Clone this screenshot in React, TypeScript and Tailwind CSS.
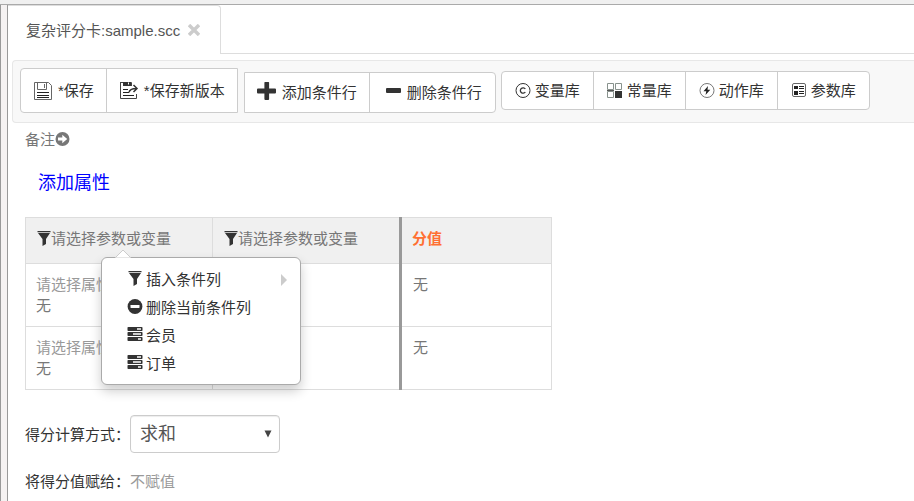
import React, { useState } from 'react';

type IconProps = { className?: string };

const SaveIcon = () => (
  <svg className="h-5 w-5" viewBox="0 0 20 20" fill="none" stroke="#666" strokeWidth="1">
    <path d="M1.5 1.5h14l3 3v14h-17z" />
    <path d="M4.5 1.5v7h9v-7M11.5 3v4" />
    <path d="M4 11.500h12M4 14.500h12M4 16.500h12" stroke="#222" />
  </svg>
);

const SaveAsIcon = () => (
  <svg className="h-5 w-5" viewBox="0 0 20 20" fill="none" stroke="#444">
    <path d="M1.500 1v16.500h16V13M12.500 5V1.500H1.500" />
    <path d="M4 1h8v4H4z" fill="#333" stroke="none" />
    <path d="M9.500 1.500v2" stroke="#fff" />
    <path d="M4 8.500h5M4 11.500h6M4 14.500h11" stroke="#222" />
    <path d="M10 11.500c.5-3 2.500-4 7.500-4M14.500 4l3.500 3.500-3.500 3.500" strokeWidth="1.500" stroke="#333" />
  </svg>
);

const PlusIcon = () => (
  <svg className="h-6 w-5" viewBox="0 0 20 24" fill="#333">
    <path d="M8 1h3.500a.6.6 0 0 1 .6.6V7.500H18a1 1 0 0 1 1 1v3a1 1 0 0 1-1 1h-5.900V18a1 1 0 0 1-1 1H8.400a1 1 0 0 1-1-1v-5.500H1a1 1 0 0 1-1-1v-3a1 1 0 0 1 1-1h6.400V1.600A.6.6 0 0 1 8 1z" />
  </svg>
);

const MinusIcon = () => (
  <svg className="h-6 w-4" viewBox="0 0 16 24" fill="#333">
    <rect x="0" y="7" width="15" height="5" rx="1" />
  </svg>
);

const CopyrightIcon = () => (
  <svg className="h-4 w-4" viewBox="0 0 16 16" fill="none" stroke="#333">
    <circle cx="8" cy="7.500" r="7" strokeWidth="1" />
    <path d="M10.300 6a2.700 2.700 0 1 0 0 3" strokeWidth="1.300" />
  </svg>
);

const BlocksIcon = () => (
  <svg className="h-4 w-4" viewBox="0 0 16 16" fill="none" stroke="#88928d">
    <path d="M.5 .5h6v6h-6zM8.500 .5h6v6h-6zM.5 8.500h6v6h-6z" />
    <path d="M0 7.500h7" stroke="#555" />
    <path d="M8 8h7v7H8z" fill="#333" stroke="none" />
  </svg>
);

const BoltIcon = () => (
  <svg className="h-4 w-4" viewBox="0 0 16 16" fill="none">
    <circle cx="8" cy="7.500" r="7" stroke="#777" />
    <path d="M9 3L4.500 8.300h2.800L6.500 12l4.800-5.300H8.500z" fill="#222" />
  </svg>
);

const ParamIcon = () => (
  <svg className="h-4 w-4" viewBox="0 0 16 16" fill="none">
    <rect x="1.500" y=".5" width="13" height="13" rx="1.500" stroke="#666" />
    <path d="M3 3h4v3H3zM3 8h4v4H3z" fill="#222" />
    <path d="M8 3.500h5M8 5.500h5M8 8.500h5M8 10.500h5" stroke="#222" strokeWidth="1.200" />
  </svg>
);

const FilterIcon = ({ className }: IconProps) => (
  <svg className={className} viewBox="0 0 14 16" fill="#333">
    <path d="M.5 0h13v1.200H.5zM1 2h12L9 8v5l-3.500 2V8z" />
  </svg>
);

const RemoveIcon = () => (
  <svg className="h-4 w-4" viewBox="0 0 16 16">
    <circle cx="8" cy="7.500" r="7.400" fill="#333" />
    <rect x="3.500" y="6" width="9" height="3" rx=".4" fill="#fff" />
  </svg>
);

const TasksIcon = () => (
  <svg className="h-4 w-4" viewBox="0 0 16 16">
    <rect x=".5" y="0" width="15" height="4" rx=".8" fill="#333" />
    <rect x=".5" y="5" width="15" height="4" rx=".8" fill="#333" />
    <rect x=".5" y="10" width="15" height="4" rx=".8" fill="#333" />
    <path d="M10 2h4M6 7h8M11 12h3" stroke="#fff" strokeWidth="1.300" />
  </svg>
);

const ArrowCircleIcon = () => (
  <svg className="h-4 w-4" viewBox="0 0 16 16">
    <circle cx="7.500" cy="7" r="7" fill="#777" />
    <path d="M3 5.600h4.300V2.800L12.200 7l-4.900 4.200V8.400H3z" fill="#fff" />
  </svg>
);

const CloseIcon = () => (
  <svg className="h-3 w-3" viewBox="0 0 12 12" fill="none" stroke="#ccc" strokeWidth="3.400">
    <path d="M1 1l10 10M11 1L1 11" />
  </svg>
);

const libraries = [
  { label: '变量库', icon: <CopyrightIcon /> },
  { label: '常量库', icon: <BlocksIcon /> },
  { label: '动作库', icon: <BoltIcon /> },
  { label: '参数库', icon: <ParamIcon /> },
];

const menuItems = [
  { label: '插入条件列', icon: <FilterIcon className="h-4 w-4" />, submenu: true },
  { label: '删除当前条件列', icon: <RemoveIcon /> },
  { label: '会员', icon: <TasksIcon /> },
  { label: '订单', icon: <TasksIcon /> },
];

const ColumnMenu = () => (
  <div className="absolute left-[75px] top-[39px] z-10 w-[200px] rounded-md border border-[#aaa] bg-white py-[7px] font-normal text-[#333] shadow-[0_6px_12px_rgba(0,0,0,0.2)]">
    <svg className="absolute -top-2 left-3 h-2 w-[18px]" viewBox="0 0 18 8">
      <path d="M1 8l8-8 8 8z" fill="#fff" stroke="#ccc" />
    </svg>
    <ul>
      {menuItems.map((item) => (
        <li key={item.label}>
          <button type="button" className="flex h-7 w-full items-center gap-[3px] pl-[25px] pr-3 text-left">
            {item.icon}
            <span>{item.label}</span>
            {item.submenu && (
              <svg className="ml-auto h-4 w-2" viewBox="0 0 8 16" fill="#ccc">
                <path d="M1 3l6 6-6 6z" />
              </svg>
            )}
          </button>
        </li>
      ))}
    </ul>
  </div>
);

const Toolbar = () => (
  <div className="ml-1 flex h-[63px] items-start rounded-l border border-r-0 border-[#e7e7e7] bg-[#f8f8f8] pl-[7px] pt-[7px]">
    <div className="flex h-[45px] shrink-0 divide-x divide-[#ccc] rounded-l border border-[#ccc] bg-white">
      <button type="button" className="flex items-center gap-[5px] px-3">
        <SaveIcon />
        <span>*保存</span>
      </button>
      <button type="button" className="flex items-center gap-[5px] px-3">
        <SaveAsIcon />
        <span>*保存新版本</span>
      </button>
    </div>
    <div className="ml-[6px] mt-1 flex h-[41px] shrink-0 divide-x divide-[#ccc] rounded-r border border-[#ccc] bg-white">
      <button type="button" className="flex items-center gap-[5px] px-3">
        <PlusIcon />
        <span>添加条件行</span>
      </button>
      <button type="button" className="flex items-center gap-[5px] pl-4 pr-[13px]">
        <MinusIcon />
        <span>删除条件行</span>
      </button>
    </div>
    <div className="ml-[5px] mt-[3px] flex h-[39px] shrink-0 divide-x divide-[#ccc] rounded border border-[#ccc] bg-white">
      {libraries.map(({ label, icon }) => (
        <button type="button" key={label} className="flex items-center gap-1 px-[13px]">
          {icon}
          <span>{label}</span>
        </button>
      ))}
    </div>
  </div>
);

const ScoreTable = () => (
  <table className="mt-[21px] w-[527px] table-fixed border-collapse text-left text-[#777]">
    <colgroup>
      <col className="w-[187px]" />
      <col className="w-[188px]" />
      <col />
    </colgroup>
    <thead>
      <tr className="h-[46px] bg-[#f0f0f0]">
        <th className="relative border border-[#ddd] px-[11px] pb-1 font-normal">
          <span className="flex items-center">
            <FilterIcon className="h-4 w-[14px]" />
            请选择参数或变量
          </span>
          <ColumnMenu />
        </th>
        <th className="border border-[#ddd] px-[11px] pb-1 font-normal">
          <span className="flex items-center">
            <FilterIcon className="h-4 w-[14px]" />
            请选择参数或变量
          </span>
        </th>
        <th className="border border-l-[3px] border-[#ddd] border-l-[#999] px-[10px] pb-1 font-bold text-[#ff7033]">
          分值
        </th>
      </tr>
    </thead>
    <tbody>
      {[1, 2].map((row) => (
        <tr key={row} className="h-[63px] align-top">
          <td className="border border-[#ddd] px-[10px] pt-[10px]">
            <div className="text-[#999]">请选择属性</div>
            <div>无</div>
          </td>
          <td className="border border-[#ddd] px-[10px] pt-[10px]"></td>
          <td className="border border-l-[3px] border-[#ddd] border-l-[#999] px-[11px] pt-[10px]">无</td>
        </tr>
      ))}
    </tbody>
  </table>
);

const App: React.FC = () => {
  const [method, setMethod] = useState('sum');

  return (
    <div className="flex min-h-screen flex-col overflow-x-hidden bg-white font-['Liberation_Sans','Noto_Sans_CJK_SC',sans-serif] text-[15px] leading-[21px] text-[#333]">
      <div className="h-[5px] border-b border-[#aaa] bg-[#f0f0f0]" />
      <div className="flex flex-1">
        <div className="w-2 shrink-0 border-x border-[#999] bg-[#f5f2f2]" />
        <main className="min-w-0 flex-1">
          <div className="flex h-[49px]">
            <div className="flex items-center gap-2 rounded-tr border-r border-t border-[#ddd] pl-[18px] pr-5 text-[#555]">
              <span>复杂评分卡:sample.scc</span>
              <button type="button" aria-label="关闭">
                <CloseIcon />
              </button>
            </div>
            <div className="flex-1 border-b border-[#ddd]" />
          </div>

          <div className="mt-[6px]">
            <Toolbar />
          </div>

          <div className="pl-[17px]">
            <button type="button" className="mt-[6px] flex items-center text-[#777]">
              备注
              <ArrowCircleIcon />
            </button>
            <a href="#" className="ml-[13px] mt-[21px] block w-fit text-[18px] leading-[25px] text-[#0000ff]">
              添加属性
            </a>

            <ScoreTable />

            <div className="mt-[25px] flex items-center">
              <label htmlFor="method">得分计算方式：</label>
              <div className="relative">
                <select
                  id="method"
                  value={method}
                  onChange={(e) => setMethod(e.target.value)}
                  className="h-[38px] w-[150px] appearance-none rounded border border-[#ccc] bg-white pl-[9px] text-[18px] text-[#555] shadow-[inset_0_1px_1px_rgba(0,0,0,0.075)]"
                >
                  <option value="sum">求和</option>
                  <option value="weighted">加权求和</option>
                </select>
                <svg className="pointer-events-none absolute right-2 top-[15px] h-2 w-2" viewBox="0 0 8 8" fill="#444">
                  <path d="M.5 .5h7L4 7.500z" />
                </svg>
              </div>
            </div>
            <div className="mt-[18px] flex">
              <span>将得分值赋给：</span>
              <button type="button" className="text-[#999]">不赋值</button>
            </div>
          </div>
        </main>
      </div>
    </div>
  );
};

export default App;
